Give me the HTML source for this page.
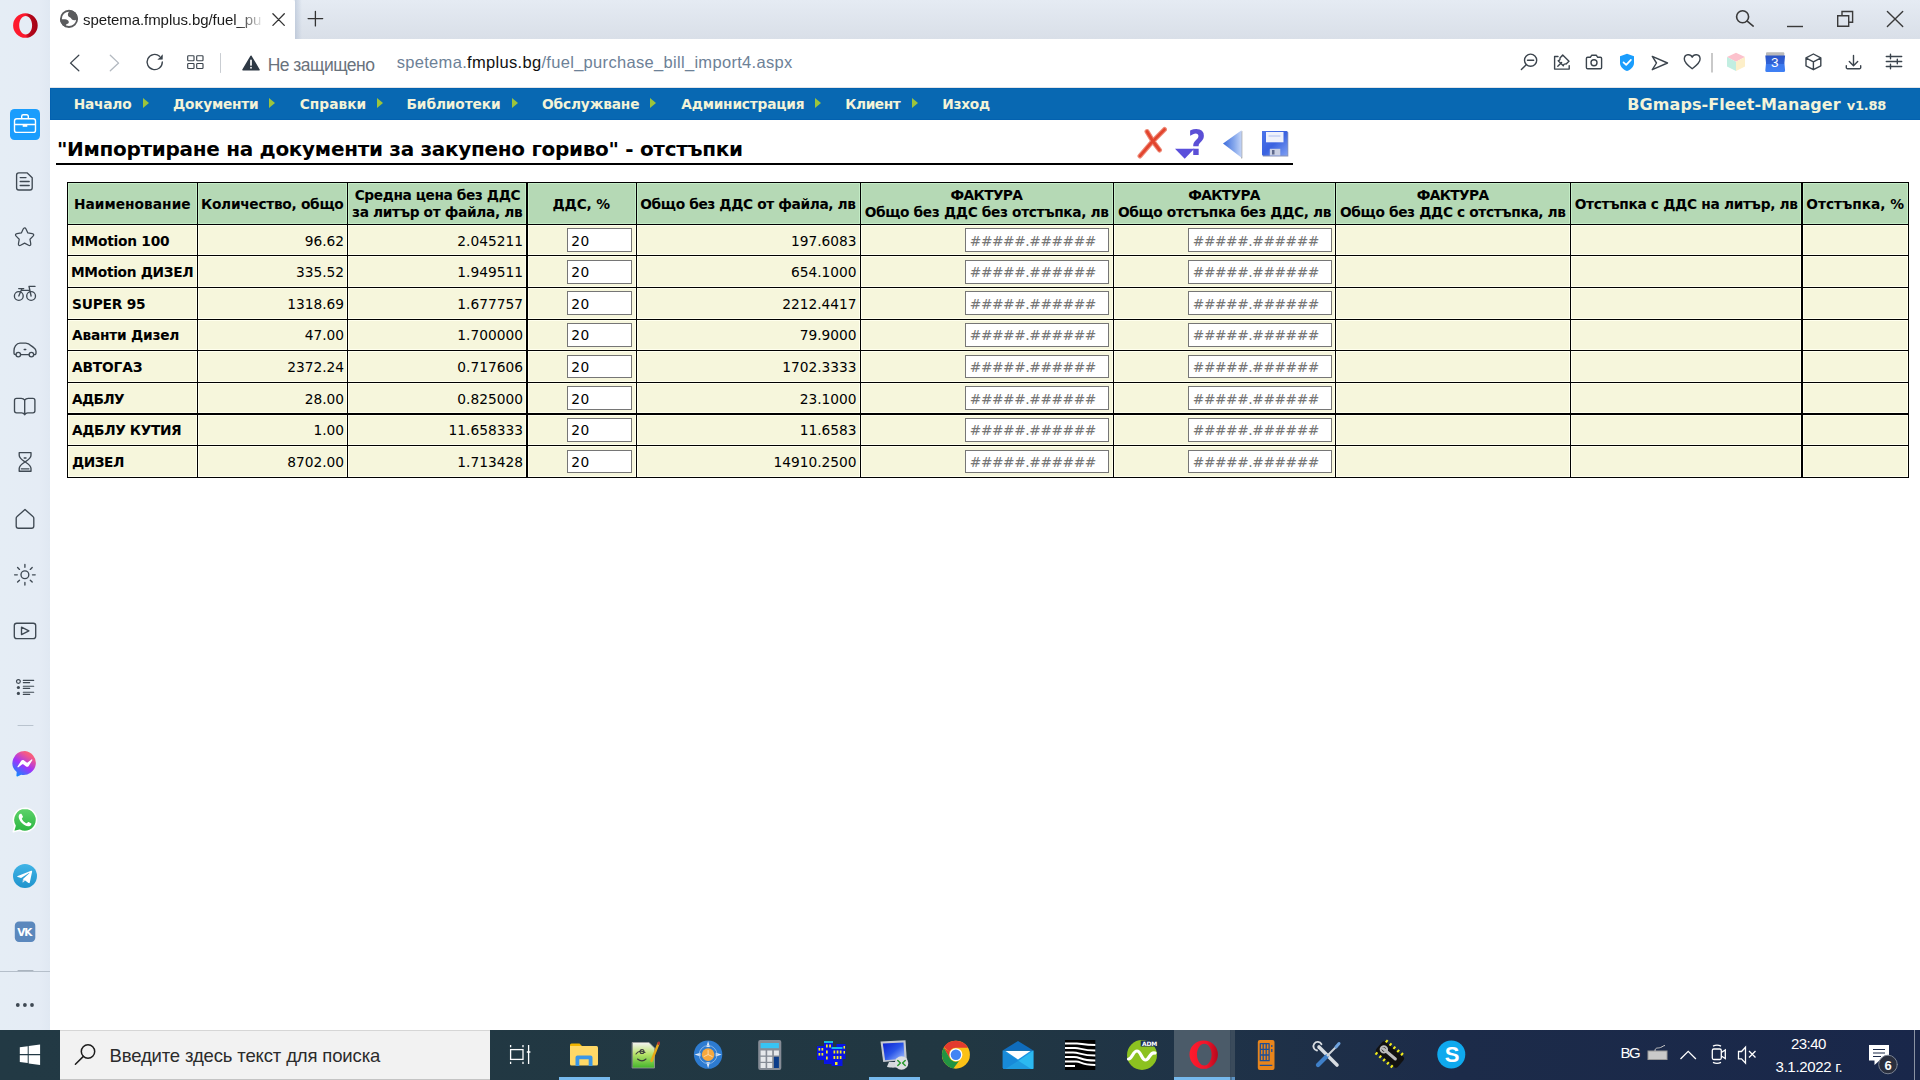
<!DOCTYPE html>
<html lang="bg"><head><meta charset="utf-8"><title>spetema.fmplus.bg/fuel_purchase_bill_import4.aspx</title>
<style>
html,body{margin:0;padding:0}
body{width:1920px;height:1080px;overflow:hidden;background:#fff;position:relative;font-family:"Liberation Sans",sans-serif}
div,span,svg{position:absolute;box-sizing:border-box}
.t{white-space:nowrap;display:block}
.i{position:static}
.tabt{width:180px;overflow:hidden;-webkit-mask-image:linear-gradient(90deg,#000 156px,transparent 181px);mask-image:linear-gradient(90deg,#000 156px,transparent 181px)}
.side{left:0;top:0;width:50px;height:1030px;background:linear-gradient(90deg,#e5edf5 0,#e5ecf5 78%,#e0e8f2 100%)}
.strip{left:50px;top:0;width:1870px;height:39px;background:linear-gradient(#e5ebf3,#d9dfe8)}
.tab{left:50px;top:0;width:245px;height:39px;background:#fff;border-radius:0 2px 0 0}
.tabsh{left:295px;top:0;width:7px;height:39px;background:linear-gradient(90deg,rgba(150,168,195,.38),rgba(150,168,195,0))}
.bar{left:50px;top:39px;width:1870px;height:49px;background:#fff;border-bottom:1px solid #e3e5e8}
.nav{left:50px;top:88px;width:1870px;height:32px;background:#0868b2;border:1px solid #0361af;border-right:0}
.tri{width:0;height:0;border-left:6px solid #9cc43c;border-top:5.5px solid transparent;border-bottom:5.5px solid transparent}
.uline{left:56px;top:163px;width:1237px;height:2px;background:#000}
.blk{background:#000}
.hc{background:#b5d9b5;border:1px solid #c4ecc7}
.dc{background:#f6f6dc;border:1px solid #ffffee}
.inp{background:#fff;border:1px solid #767676}
.task{left:0;top:1030px;width:1920px;height:50px;background:linear-gradient(90deg,#223944 0%,#213742 50%,#1f3347 62%,#1c2b49 76%,#19274a 100%)}
.sbox{left:60px;top:1030px;width:430px;height:50px;background:#f2f2f2;border-top:1px solid #d6d6d6;border-bottom:1px solid #c4c4c4}
</style></head><body>
<div class="side"></div>
<svg class="sb" style="left:0;top:0" width="50" height="1030" viewBox="0 0 50 1030" fill="none" stroke="#3f4953" stroke-width="1.35" stroke-linecap="round" stroke-linejoin="round">
<defs>
<linearGradient id="gop" x1="0" y1="0" x2="1" y2="0"><stop offset="0" stop-color="#ff1b2d"/><stop offset=".5" stop-color="#fb172c"/><stop offset=".64" stop-color="#b8091c"/><stop offset="1" stop-color="#a30013"/></linearGradient>
<linearGradient id="gms" x1=".2" y1="1" x2=".8" y2="0"><stop offset="0" stop-color="#0a8dff"/><stop offset=".45" stop-color="#a033fa"/><stop offset=".8" stop-color="#f0568f"/><stop offset="1" stop-color="#ff6b63"/></linearGradient>
<linearGradient id="gwa" x1="0" y1="0" x2="0" y2="1"><stop offset="0" stop-color="#5fd36b"/><stop offset="1" stop-color="#2ab540"/></linearGradient>
<linearGradient id="gtg" x1="0" y1="0" x2="0" y2="1"><stop offset="0" stop-color="#41b4e6"/><stop offset="1" stop-color="#1e93cd"/></linearGradient>
</defs>
<!-- opera -->
<path stroke="none" fill="url(#gop)" fill-rule="evenodd" d="M25.400 13.200a12.300 12.300 0 1 0 0 24.600a12.300 12.300 0 1 0 0-24.600zM25.650 16c3.550 0 6.450 4.100 6.450 9.300s-2.900 9.300-6.450 9.300s-6.450-4.100-6.450-9.300s2.900-9.300 6.450-9.300z"/>
<!-- workspace -->
<rect x="10" y="109" width="30" height="31" rx="4.500" fill="#1a9dfd" stroke="none"/>
<g stroke="#fff" stroke-width="1.400"><rect x="14.500" y="118.700" width="21" height="13.700" rx="2.200"/><path d="M21.700 118.500v-2.300a1.500 1.500 0 0 1 1.500-1.500h3.600a1.500 1.500 0 0 1 1.500 1.500v2.300M14.700 124.500h20.600"/><rect x="22.700" y="124.500" width="4.600" height="2.300" fill="#fff" stroke="none"/></g>
<!-- doc -->
<path d="M18.800 172.800h8.200l5.200 5v10a2.200 2.200 0 0 1-2.200 2.200h-11.200a2.200 2.200 0 0 1-2.200-2.200v-12.800a2.200 2.200 0 0 1 2.200-2.200zM20.200 177.600h5.800M20.200 181.500h9M20.200 185.500h9"/>
<!-- star -->
<path transform="translate(24.600 237) scale(.93 .95) translate(-24.600 -237.700)" d="M24.600 228c.6 0 1.100.4 1.500 1.200l2 4.200 4.700.7c1.700.3 2.100 1.500.9 2.700l-3.300 3.300.8 4.600c.3 1.700-.8 2.500-2.300 1.700l-4.300-2.200-4.300 2.200c-1.500.8-2.600 0-2.300-1.700l.8-4.600-3.300-3.300c-1.200-1.200-.8-2.400.9-2.700l4.700-.7 2-4.200c.4-.8.900-1.200 1.500-1.200z"/>
<!-- bike -->
<circle cx="18.800" cy="296" r="4.400"/><circle cx="31.100" cy="296" r="4.400"/><path d="M18.800 296l3.200-7.400M18.700 288.600h5M22 290.300h7.300M31.100 296l-2.100-9.600h6"/>
<!-- car -->
<path d="M15.800 354.600h-.5a1.300 1.300 0 0 1-1.300-1.300v-2.800c0-3.200 2.200-7.400 6-7.400h5.800c2.600 0 4 1.200 5.600 2.800l2.300 1.700c1.500 1 2.300 2.100 2.300 3.700v2a1.300 1.300 0 0 1-1.300 1.300h-.900M20.800 354.600h8.200M24.200 349.500h1.600"/><circle cx="18.300" cy="354.600" r="2.300"/><circle cx="31.400" cy="354.600" r="2.300"/>
<!-- book -->
<path d="M24.700 400.200v14.600M24.700 400.200c-.8-1.200-2-1.800-3.500-1.800h-4.700a2 2 0 0 0-2 2v10.400a2 2 0 0 0 2 2h5.200c1.300 0 2.300.6 3 2c.7-1.400 1.700-2 3-2h5.200a2 2 0 0 0 2-2v-10.400a2 2 0 0 0-2-2h-4.700c-1.500 0-2.700.6-3.500 1.800z"/>
<!-- hourglass -->
<path d="M19.200 452.600h11.800v2.600c0 3-2.700 4.600-5.900 6.700c-3.200-2.100-5.900-3.700-5.900-6.700zM19.200 471.200h11.800v-2.600c0-3-2.700-4.600-5.900-6.700c-3.200 2.100-5.900 3.700-5.900 6.700zM21.300 468.800h7.600M24.200 458h1.800"/>
<!-- home -->
<path d="M25 509.400l-7.900 7a2.500 2.500 0 0 0-.9 1.900v7.600a2.300 2.300 0 0 0 2.300 2.300h13a2.300 2.300 0 0 0 2.300-2.300v-7.600a2.500 2.500 0 0 0-.9-1.900z"/>
<!-- sun -->
<circle cx="24.900" cy="574.800" r="3.900"/><path d="M24.900 564.500v2.700M24.900 582.400v2.700M14.600 574.800h2.700M32.500 574.800h2.700M17.600 567.500l1.900 1.900M30.300 580.200l1.900 1.900M17.600 582.100l1.900-1.900M30.300 569.400l1.900-1.900"/>
<!-- play -->
<rect x="14.300" y="623.200" width="21.400" height="15.400" rx="2.400"/><path d="M21.500 627.200v7.400l7.400-3.700z"/>
<!-- list -->
<circle cx="18.400" cy="681.500" r="1.900" stroke-width="1.200"/><circle cx="18.400" cy="687.500" r="1.600" fill="#3f4953" stroke="none"/><circle cx="18.400" cy="693.400" r="1.600" fill="#3f4953" stroke="none"/>
<path stroke-width="1.100" d="M23.300 680.400h10.400M23.300 682.600h6.400M23.300 686.300h10.400M23.300 688.400h6.400M23.300 692.200h10.400M23.300 694.400h6.400"/>
<path stroke="#b9c3ce" stroke-width="1" d="M18 725.500h15"/>
<!-- messenger -->
<path stroke="none" fill="url(#gms)" d="M24.900 751a12.400 12 0 0 0-8.200 21l-.3 3.700c0 .6.500 1 1.100.8l3.600-1.800a12.400 12 0 1 0 3.800-23.700z"/>
<path stroke="none" fill="#fff" d="M17.500 766.500l3.700-5.700c.6-.9 1.800-1.100 2.600-.5l2.900 2.200c.3.200.6.200.9 0l3.900-3c.5-.4 1.200.2.800.8l-3.600 5.700c-.6.900-1.800 1.100-2.600.5l-2.900-2.200c-.3-.2-.6-.2-.9 0l-3.900 3c-.5.400-1.200-.2-.900-.8z"/>
<!-- whatsapp -->
<path fill="url(#gwa)" stroke="#fff" stroke-width="1.600" d="M25 808.300a11.600 11.600 0 0 0-10 17.400l-1.700 6.100 6.300-1.600a11.600 11.600 0 1 0 5.400-21.900z"/>
<path stroke="none" fill="#fff" d="M20.700 813.800c-.5 0-1 .2-1.400.8c-1.600 2.400.2 6 2.600 8.400c2.500 2.500 5.800 4.200 8.400 2.700c.9-.5 1.300-1.700 1-2.200l-2.700-1.500c-.5-.2-.9.100-1.400.9c-.3.400-.7.500-1.200.3c-1.800-.9-3.200-2.200-4.100-4.100c-.2-.4 0-.8.300-1.100c.7-.6.900-1 .7-1.500l-1.200-2.300c-.2-.3-.6-.4-1-.4z"/>
<!-- telegram -->
<circle cx="25" cy="876" r="12" fill="url(#gtg)" stroke="none"/>
<path stroke="none" fill="#fff" d="M17.800 875.900l13.300-5.200c.6-.2 1.200.2 1 1l-2.300 10.700c-.2.800-.6.900-1.300.6l-3.400-2.500-1.700 1.600c-.2.200-.4.400-.7.400l.3-3.500 6.300-5.700c.3-.3-.1-.4-.4-.2l-7.800 4.900-3.300-1c-.7-.2-.7-.7 0-1.100z"/>
<path stroke="none" fill="#c8daea" d="M22.700 882.500l.3-3.500 2.100 1.500z"/>
<!-- vk -->
<rect x="14.800" y="921.500" width="20.500" height="20.500" rx="4.200" fill="#5b88bd" stroke="none"/>
<path stroke="#b5bfca" stroke-width="1" d="M0 971.500h50"/><path stroke="#aab4bf" stroke-width="1" d="M18 970.500h15"/>
<circle cx="17.800" cy="1005" r="1.900" fill="#3f4953" stroke="none"/><circle cx="24.900" cy="1005" r="1.900" fill="#3f4953" stroke="none"/><circle cx="32" cy="1005" r="1.900" fill="#3f4953" stroke="none"/>
</svg>
<span class="t" style="left:17.300px;top:925.500px;font:bold 10.500px/12px 'DejaVu Sans',sans-serif;color:#fff;letter-spacing:-1.200px">VK</span>

<div class="strip"></div>
<div class="tabsh"></div>
<div class="tab"></div>
<div class="bar"></div>
<svg style="left:0;top:0" width="1920" height="88" viewBox="0 0 1920 88" fill="none" stroke="#3b444d" stroke-width="1.400" stroke-linecap="round" stroke-linejoin="round">
<defs><linearGradient id="gcal" x1="0" y1="0" x2="0" y2="1"><stop offset="0" stop-color="#2b55c8"/><stop offset=".5" stop-color="#2f62d6"/><stop offset=".51" stop-color="#3b78ee"/><stop offset="1" stop-color="#3f80f4"/></linearGradient></defs>
<!-- favicon globe -->
<clipPath id="cgl"><circle cx="69" cy="18.900" r="9"/></clipPath>
<circle cx="69" cy="18.900" r="8.100" fill="#fff" stroke="#5a5b5d" stroke-width="1.900"/>
<g clip-path="url(#cgl)" fill="#5a5b5d" stroke="none"><path d="M70.300 10.500c-1.500 1.200-2.400 2.600-2.400 4.200c0 2.200 1.700 2.200 2.700 3.100c1 .9 1.200 2 2.600 2.300c1.300.3 2.400-.5 4-.7l4-.4v-11h-11z"/><path d="M58 19.700c3-.5 6.500-.8 8.400-.2c1.700.6 2.700 1.900 2.300 3.200c-.4 1.200-1.900 1-2.600 1.900c-.6.800-.4 1.600.3 2.400l-2 3h-7z"/></g>
<!-- tab close / plus -->
<path stroke="#333" stroke-width="1.300" d="M272.900 13.800l11.400 11.600M284.300 13.800l-11.400 11.600M315.400 11.300v14.600M308.100 18.600h14.600"/>
<!-- nav -->
<path stroke-width="1.300" d="M78.800 55.300l-8.300 7.800 8.300 7.700"/>
<path stroke="#b3b9c0" stroke-width="1.300" d="M110.300 55.300l8.300 7.800-8.300 7.700"/>
<path stroke-width="1.350" d="M162.300 62a7.600 7.600 0 1 1-2.700-5.800"/><path fill="#3b444d" stroke="none" d="M157.400 59.700l5.300-.3.100-5.200z"/>
<g stroke-width="1.150"><rect x="187.700" y="55.700" width="6.300" height="5" rx=".8"/><rect x="196.700" y="55.700" width="6.300" height="5" rx=".8"/><rect x="187.700" y="63.500" width="6.300" height="5" rx=".8"/><rect x="196.700" y="63.500" width="6.300" height="5" rx=".8"/></g>
<path stroke="#c9cdd2" stroke-width="1" d="M220.500 53.500v19"/>
<!-- warning -->
<path fill="#2e3945" stroke="#2e3945" stroke-width="1.600" d="M251 56.300l8 13.500h-16z"/><path stroke="#fff" stroke-width="1.700" d="M251 60.300v4.700M251 67.600v.2"/>
<!-- right toolbar -->
<circle cx="1530.600" cy="60.200" r="6.100"/><path d="M1526.200 64.800l-4.800 4.600M1527.500 60.200h6.200"/>
<path d="M1558 56.500h-3.400v12.600h14.600v-3.500M1557.800 66.300l3.800-3.800M1560 57.900l2.700-2.900 6.300 6.300-2.900 2.700c-1.700-.4-2.600.5-2.800 1.800l-5.100-5.100c1.300-.2 2.200-1.100 1.800-2.800z"/>
<path d="M1587.700 57.300h2.600l1.300-2h4.800l1.300 2h2.600a1.300 1.300 0 0 1 1.300 1.300v8.800a1.300 1.300 0 0 1-1.300 1.300h-12.600a1.300 1.300 0 0 1-1.300-1.300v-8.800a1.300 1.300 0 0 1 1.300-1.300z"/><circle cx="1594" cy="62.700" r="3"/>
<path fill="#1a9dfd" stroke="none" d="M1627 53.800l7 2.500v6.500c0 4-3 6.700-7 8.300c-4-1.600-7-4.300-7-8.300v-6.500z"/><path stroke="#fff" stroke-width="1.700" d="M1623.500 62.300l2.700 2.600 4.700-5"/>
<path d="M1652.300 56.400l15.200 6.600-15.200 6.700 4.200-6.700z"/>
<path d="M1692.200 57.200c1.500-3.400 7.600-3.500 7.900 1.500c.2 3.400-3.600 6.800-7.900 10.100c-4.300-3.300-8.100-6.700-7.900-10.100c.3-5 6.400-4.900 7.900-1.500z"/>
<path stroke="#c9c9c9" stroke-width="2" stroke-linecap="butt" d="M1712 53v19.600"/>
<g stroke="none"><path fill="#fcc2cd" d="M1736 52.800l9 4.300-9 4.600-9-4.600z"/><path fill="#c2eee1" d="M1727 57.100l9 4.600v9.200l-9-4.500z"/><path fill="#fdefc9" d="M1745 57.100l-9 4.600v9.200l9-4.500z"/>
<rect x="1766" y="52.300" width="18.300" height="4" rx="1" fill="#b9b9b9"/><path fill="url(#gcal)" d="M1765.300 55.500h19.800l-.7 7.500.7 7.500a1.500 1.500 0 0 1-1.500 1.500h-16.800a1.500 1.500 0 0 1-1.500-1.500l.7-7.500z"/></g>
<path d="M1813.400 54l7.400 3.900v7.900l-7.400 3.900-7.400-3.900v-7.900zM1806.300 58.100l7.100 3.700 7.100-3.700M1813.400 61.800v7.700"/>
<path d="M1853.500 55.500v10M1849.300 61.500l4.200 4.200 4.200-4.200M1846.300 65.800v1.700a1.200 1.200 0 0 0 1.200 1.200h12a1.200 1.200 0 0 0 1.200-1.200v-1.700"/>
<path d="M1886.300 56.500h15.400M1886.300 61.500h15.400M1886.300 66.500h15.400M1890.500 54.300v4.400M1897.300 59.300v4.400M1890.500 64.300v4.400"/>
<!-- window controls -->
<g stroke="#3a3a3a" stroke-width="1.400"><circle cx="1742.600" cy="16.700" r="6" stroke-width="1.600"/><path stroke-width="1.600" d="M1747.200 21.200l6 4.900"/><path stroke-linecap="butt" d="M1787 26.500h16"/><path stroke-linejoin="miter" d="M1837.700 15.700h11v10.600h-11zM1842 15.500v-4h10.600v10.800h-3.700"/><path d="M1887.400 11.400l15.300 15.200M1902.700 11.400l-15.300 15.200"/></g>
</svg>
<span class="t" style="left:1771px;top:55px;font:normal 13.500px/16px 'Liberation Sans',sans-serif;color:#fff">3</span>

<div class="nav"></div>
<div class="uline"></div>
<svg style="left:1130px;top:120px" width="170" height="44" viewBox="1130 120 170 44" fill="none" stroke-linecap="round" stroke-linejoin="round">
<defs>
<linearGradient id="gbk" x1="0" y1="0" x2="1" y2="0"><stop offset="0" stop-color="#3b6bdc"/><stop offset=".6" stop-color="#86a8ec"/><stop offset="1" stop-color="#c3d4f7"/></linearGradient>
<linearGradient id="gsv" x1="0" y1="0" x2="1" y2="1"><stop offset="0" stop-color="#4a74ea"/><stop offset=".5" stop-color="#3a62e0"/><stop offset="1" stop-color="#7fa0f2"/></linearGradient>
<filter id="bl" x="-10%" y="-10%" width="120%" height="120%"><feGaussianBlur stdDeviation=".55"/></filter>
</defs>
<g filter="url(#bl)"><path stroke="#ee8a78" stroke-width="5" d="M1164.500 129.500c-9 8.500-17 17-24.500 26.500M1147 131.500c3.500 6.500 7.500 12.500 12.500 18.500"/><path stroke="#e2452f" stroke-width="2.800" d="M1164.500 129.500c-9 8.500-17 17-24.500 26.500M1147 131.500c3.500 6.500 7.500 12.500 12.500 18.500"/></g>
<path fill="#5a4fdb" d="M1175 148.800h19.300l-9.600 10z"/>
<g filter="url(#bl)"><path fill="#9a9a9a" d="M1242.300 131v27.300l-1.200.3v-27z"/><path fill="url(#gbk)" d="M1223 143.500l18.600-13.300v27.600z"/></g>
<g filter="url(#bl)"><path fill="#8a93b5" d="M1262.800 131.800h24.500a1 1 0 0 1 1 1v23.800h-25.500z"/><path fill="url(#gsv)" d="M1262 131h24.500a1 1 0 0 1 1 1v23.500h-24.500a1 1 0 0 1-1-1z"/><rect x="1266" y="132" width="17.500" height="10.300" fill="#eef1fb"/><path stroke="#9db3ee" stroke-width=".8" d="M1269 136h11"/><rect x="1269.800" y="148.800" width="10.500" height="6.700" fill="#c9cfe2"/><rect x="1272" y="150" width="2.500" height="4.500" fill="#5f6a8c"/></g>
</svg>
<span class="t" style="left:1188.300px;top:122.500px;font:bold 35px/40px 'DejaVu Sans',sans-serif;color:#5b4fd6;transform:scaleX(.88);transform-origin:0 0">?</span>

<div class="blk" style="left:67px;top:182px;width:1842px;height:296px"></div>
<div class="hc" style="left:68px;top:183px;width:129px;height:41px"></div>
<div class="hc" style="left:198px;top:183px;width:149px;height:41px"></div>
<div class="hc" style="left:348px;top:183px;width:178px;height:41px"></div>
<div class="hc" style="left:528px;top:183px;width:108px;height:41px"></div>
<div class="hc" style="left:637px;top:183px;width:223px;height:41px"></div>
<div class="hc" style="left:861px;top:183px;width:252px;height:41px"></div>
<div class="hc" style="left:1114px;top:183px;width:221px;height:41px"></div>
<div class="hc" style="left:1336px;top:183px;width:234px;height:41px"></div>
<div class="hc" style="left:1571px;top:183px;width:230px;height:41px"></div>
<div class="hc" style="left:1803px;top:183px;width:105px;height:41px"></div>
<div class="dc" style="left:68px;top:225px;width:129px;height:30px"></div>
<div class="dc" style="left:198px;top:225px;width:149px;height:30px"></div>
<div class="dc" style="left:348px;top:225px;width:178px;height:30px"></div>
<div class="dc" style="left:528px;top:225px;width:108px;height:30px"></div>
<div class="dc" style="left:637px;top:225px;width:223px;height:30px"></div>
<div class="dc" style="left:861px;top:225px;width:252px;height:30px"></div>
<div class="dc" style="left:1114px;top:225px;width:221px;height:30px"></div>
<div class="dc" style="left:1336px;top:225px;width:234px;height:30px"></div>
<div class="dc" style="left:1571px;top:225px;width:230px;height:30px"></div>
<div class="dc" style="left:1803px;top:225px;width:105px;height:30px"></div>
<div class="dc" style="left:68px;top:256px;width:129px;height:31px"></div>
<div class="dc" style="left:198px;top:256px;width:149px;height:31px"></div>
<div class="dc" style="left:348px;top:256px;width:178px;height:31px"></div>
<div class="dc" style="left:528px;top:256px;width:108px;height:31px"></div>
<div class="dc" style="left:637px;top:256px;width:223px;height:31px"></div>
<div class="dc" style="left:861px;top:256px;width:252px;height:31px"></div>
<div class="dc" style="left:1114px;top:256px;width:221px;height:31px"></div>
<div class="dc" style="left:1336px;top:256px;width:234px;height:31px"></div>
<div class="dc" style="left:1571px;top:256px;width:230px;height:31px"></div>
<div class="dc" style="left:1803px;top:256px;width:105px;height:31px"></div>
<div class="dc" style="left:68px;top:288px;width:129px;height:31px"></div>
<div class="dc" style="left:198px;top:288px;width:149px;height:31px"></div>
<div class="dc" style="left:348px;top:288px;width:178px;height:31px"></div>
<div class="dc" style="left:528px;top:288px;width:108px;height:31px"></div>
<div class="dc" style="left:637px;top:288px;width:223px;height:31px"></div>
<div class="dc" style="left:861px;top:288px;width:252px;height:31px"></div>
<div class="dc" style="left:1114px;top:288px;width:221px;height:31px"></div>
<div class="dc" style="left:1336px;top:288px;width:234px;height:31px"></div>
<div class="dc" style="left:1571px;top:288px;width:230px;height:31px"></div>
<div class="dc" style="left:1803px;top:288px;width:105px;height:31px"></div>
<div class="dc" style="left:68px;top:320px;width:129px;height:30px"></div>
<div class="dc" style="left:198px;top:320px;width:149px;height:30px"></div>
<div class="dc" style="left:348px;top:320px;width:178px;height:30px"></div>
<div class="dc" style="left:528px;top:320px;width:108px;height:30px"></div>
<div class="dc" style="left:637px;top:320px;width:223px;height:30px"></div>
<div class="dc" style="left:861px;top:320px;width:252px;height:30px"></div>
<div class="dc" style="left:1114px;top:320px;width:221px;height:30px"></div>
<div class="dc" style="left:1336px;top:320px;width:234px;height:30px"></div>
<div class="dc" style="left:1571px;top:320px;width:230px;height:30px"></div>
<div class="dc" style="left:1803px;top:320px;width:105px;height:30px"></div>
<div class="dc" style="left:68px;top:351px;width:129px;height:31px"></div>
<div class="dc" style="left:198px;top:351px;width:149px;height:31px"></div>
<div class="dc" style="left:348px;top:351px;width:178px;height:31px"></div>
<div class="dc" style="left:528px;top:351px;width:108px;height:31px"></div>
<div class="dc" style="left:637px;top:351px;width:223px;height:31px"></div>
<div class="dc" style="left:861px;top:351px;width:252px;height:31px"></div>
<div class="dc" style="left:1114px;top:351px;width:221px;height:31px"></div>
<div class="dc" style="left:1336px;top:351px;width:234px;height:31px"></div>
<div class="dc" style="left:1571px;top:351px;width:230px;height:31px"></div>
<div class="dc" style="left:1803px;top:351px;width:105px;height:31px"></div>
<div class="dc" style="left:68px;top:383px;width:129px;height:30px"></div>
<div class="dc" style="left:198px;top:383px;width:149px;height:30px"></div>
<div class="dc" style="left:348px;top:383px;width:178px;height:30px"></div>
<div class="dc" style="left:528px;top:383px;width:108px;height:30px"></div>
<div class="dc" style="left:637px;top:383px;width:223px;height:30px"></div>
<div class="dc" style="left:861px;top:383px;width:252px;height:30px"></div>
<div class="dc" style="left:1114px;top:383px;width:221px;height:30px"></div>
<div class="dc" style="left:1336px;top:383px;width:234px;height:30px"></div>
<div class="dc" style="left:1571px;top:383px;width:230px;height:30px"></div>
<div class="dc" style="left:1803px;top:383px;width:105px;height:30px"></div>
<div class="dc" style="left:68px;top:415px;width:129px;height:30px"></div>
<div class="dc" style="left:198px;top:415px;width:149px;height:30px"></div>
<div class="dc" style="left:348px;top:415px;width:178px;height:30px"></div>
<div class="dc" style="left:528px;top:415px;width:108px;height:30px"></div>
<div class="dc" style="left:637px;top:415px;width:223px;height:30px"></div>
<div class="dc" style="left:861px;top:415px;width:252px;height:30px"></div>
<div class="dc" style="left:1114px;top:415px;width:221px;height:30px"></div>
<div class="dc" style="left:1336px;top:415px;width:234px;height:30px"></div>
<div class="dc" style="left:1571px;top:415px;width:230px;height:30px"></div>
<div class="dc" style="left:1803px;top:415px;width:105px;height:30px"></div>
<div class="dc" style="left:68px;top:446px;width:129px;height:31px"></div>
<div class="dc" style="left:198px;top:446px;width:149px;height:31px"></div>
<div class="dc" style="left:348px;top:446px;width:178px;height:31px"></div>
<div class="dc" style="left:528px;top:446px;width:108px;height:31px"></div>
<div class="dc" style="left:637px;top:446px;width:223px;height:31px"></div>
<div class="dc" style="left:861px;top:446px;width:252px;height:31px"></div>
<div class="dc" style="left:1114px;top:446px;width:221px;height:31px"></div>
<div class="dc" style="left:1336px;top:446px;width:234px;height:31px"></div>
<div class="dc" style="left:1571px;top:446px;width:230px;height:31px"></div>
<div class="dc" style="left:1803px;top:446px;width:105px;height:31px"></div>
<div class="inp" style="left:567px;top:228px;width:65px;height:24px"></div>
<div class="inp" style="left:965px;top:228px;width:144px;height:24px"></div>
<div class="inp" style="left:1188px;top:228px;width:144px;height:24px"></div>
<div class="inp" style="left:567px;top:260px;width:65px;height:24px"></div>
<div class="inp" style="left:965px;top:260px;width:144px;height:24px"></div>
<div class="inp" style="left:1188px;top:260px;width:144px;height:24px"></div>
<div class="inp" style="left:567px;top:291px;width:65px;height:24px"></div>
<div class="inp" style="left:965px;top:291px;width:144px;height:24px"></div>
<div class="inp" style="left:1188px;top:291px;width:144px;height:24px"></div>
<div class="inp" style="left:567px;top:323px;width:65px;height:24px"></div>
<div class="inp" style="left:965px;top:323px;width:144px;height:24px"></div>
<div class="inp" style="left:1188px;top:323px;width:144px;height:24px"></div>
<div class="inp" style="left:567px;top:355px;width:65px;height:23px"></div>
<div class="inp" style="left:965px;top:355px;width:144px;height:23px"></div>
<div class="inp" style="left:1188px;top:355px;width:144px;height:23px"></div>
<div class="inp" style="left:567px;top:386px;width:65px;height:24px"></div>
<div class="inp" style="left:965px;top:386px;width:144px;height:24px"></div>
<div class="inp" style="left:1188px;top:386px;width:144px;height:24px"></div>
<div class="inp" style="left:567px;top:418px;width:65px;height:24px"></div>
<div class="inp" style="left:965px;top:418px;width:144px;height:24px"></div>
<div class="inp" style="left:1188px;top:418px;width:144px;height:24px"></div>
<div class="inp" style="left:567px;top:450px;width:65px;height:23px"></div>
<div class="inp" style="left:965px;top:450px;width:144px;height:23px"></div>
<div class="inp" style="left:1188px;top:450px;width:144px;height:23px"></div>
<div class="tri" style="left:143px;top:98px"></div>
<div class="tri" style="left:269px;top:98px"></div>
<div class="tri" style="left:377px;top:98px"></div>
<div class="tri" style="left:512px;top:98px"></div>
<div class="tri" style="left:650px;top:98px"></div>
<div class="tri" style="left:815px;top:98px"></div>
<div class="tri" style="left:912px;top:98px"></div>
<div class="task"></div>
<div class="sbox"></div>
<svg style="left:0;top:1030px" width="1920" height="50" viewBox="0 1030 1920 50" fill="none" stroke-linecap="round" stroke-linejoin="round">
<defs>
<linearGradient id="gop2" x1="0" y1="0" x2="1" y2="0"><stop offset="0" stop-color="#ff1b2d"/><stop offset=".6" stop-color="#f0142a"/><stop offset="1" stop-color="#b5091c"/></linearGradient>
<linearGradient id="gscr" x1="0" y1="0" x2="1" y2="1"><stop offset="0" stop-color="#0a1fd0"/><stop offset=".5" stop-color="#2a55e8"/><stop offset="1" stop-color="#a8c4ff"/></linearGradient>
<linearGradient id="gnp" x1="0" y1="0" x2="0" y2="1"><stop offset="0" stop-color="#f4f4f4"/><stop offset=".45" stop-color="#b9e26a"/><stop offset="1" stop-color="#43b52c"/></linearGradient>
</defs>
<!-- start -->
<path fill="#fff" d="M19.800 1047.300l7.900-1.100v7.800h-7.900zM28.700 1046l11.400-1.600v9.600h-11.400zM19.800 1055.200h7.900v7.800l-7.900-1.100zM28.700 1055.200h11.400v9.800l-11.400-1.600z"/>
<!-- search glass -->
<circle cx="88" cy="1051.500" r="6.700" stroke="#1d1d1d" stroke-width="1.500"/><path stroke="#1d1d1d" stroke-width="1.500" d="M83.400 1056.400l-8 7.900"/>
<!-- task view -->
<g stroke="#fff" stroke-width="1.300" stroke-linecap="butt" stroke-linejoin="miter"><rect x="510.600" y="1049.600" width="12.400" height="9.800"/><path d="M510.600 1047.200v-2.300M523 1047.200v-2.300M510.600 1061.800v2.300M523 1061.800v2.300M528.600 1044.900v19.200M526.800 1052h3.600"/></g>
<!-- explorer -->
<path fill="#f0b400" d="M570 1045a1.500 1.500 0 0 1 1.500-1.500h8l2.500 2.500h-12z"/><path fill="#ffd866" d="M570 1046h26.500a1.500 1.500 0 0 1 1.500 1.500v16.500a1.500 1.500 0 0 1-1.500 1.500h-25a1.500 1.500 0 0 1-1.500-1.500z"/>
<path fill="#3a96e6" d="M575.500 1066v-8.500a2 2 0 0 1 2-2h13a2 2 0 0 1 2 2v8.500h-3.800v-6.800h-9.400v6.800z"/>
<rect x="559" y="1077" width="51" height="3" fill="#76b9ed"/>
<!-- notepad++ -->
<path fill="url(#gnp)" stroke="#9a9a9a" stroke-width=".8" d="M632.500 1042.500h16.500l5.500 5.500v20h-22z"/><path stroke="#3c3c3c" stroke-width="1.100" d="M636 1054c2-3 6-4 9-1.500M637.500 1059c3 2.500 6 2.500 8.500 0M640 1051.500a2 2 0 1 0 4 0a2 2 0 1 0-4 0"/><path stroke="#e8a917" stroke-width="2.400" d="M658.500 1043.500l-7 17.500"/><path stroke="#a33" stroke-width="2.400" d="M658.800 1042.700l-.4 1"/>
<!-- compass -->
<circle cx="708.100" cy="1054.600" r="14.200" fill="#2d7bd0"/><path fill="#dfeaf8" d="M708.100 1041l1.800 6h-3.600zM708.100 1068.200l1.800-6h-3.600zM694.500 1054.600l6-1.800v3.600zM721.700 1054.600l-6-1.800v3.600z"/><circle cx="708.100" cy="1054.600" r="9" stroke="#9cc3ee" stroke-width=".8"/><circle cx="708.100" cy="1054.600" r="6.300" fill="#f5a83f"/><path stroke="#fbd9a8" stroke-width="1" d="M708.100 1050.500v4.100M704 1056.500l4.100-1.900 4.100 1.900"/>
<!-- calculator -->
<rect x="758.200" y="1040" width="23.100" height="30" rx="2" fill="#868c96"/><rect x="760.600" y="1043" width="18.300" height="5.200" fill="#38c4f4"/>
<g fill="#e6e8eb"><rect x="760.600" y="1050.500" width="5" height="5"/><rect x="767.200" y="1050.500" width="5" height="5"/><rect x="773.900" y="1050.500" width="5" height="5"/><rect x="760.600" y="1056.800" width="5" height="5"/><rect x="767.200" y="1056.800" width="5" height="5"/><rect x="760.600" y="1063" width="5" height="5"/><rect x="767.200" y="1063" width="5" height="5"/></g><rect x="773.900" y="1056.800" width="5" height="11.200" fill="#0b3c8a"/>
<!-- city -->
<g><rect x="817" y="1046" width="9" height="14" fill="#0a14e6"/><rect x="824" y="1042" width="9" height="22" fill="#0a14e6"/><rect x="824" y="1041.200" width="9" height="1.600" fill="#19e0f0"/><rect x="836.500" y="1044" width="9" height="15" fill="#0a14e6"/><rect x="831.500" y="1048" width="11" height="18" fill="#0a14e6"/><rect x="831.500" y="1047.200" width="11" height="1.600" fill="#19e0f0"/>
<g fill="#f4ee1a"><rect x="818.500" y="1048" width="1.700" height="2.600"/><rect x="821.500" y="1048" width="1.700" height="2.600"/><rect x="818.500" y="1053" width="1.700" height="2.600"/><rect x="821.500" y="1053" width="1.700" height="2.600"/><rect x="826" y="1044.500" width="1.700" height="3"/><rect x="829.200" y="1044.500" width="1.700" height="3"/><rect x="826" y="1050.500" width="1.700" height="3"/><rect x="826" y="1056.500" width="1.700" height="3"/><rect x="833.500" y="1050.500" width="1.700" height="3"/><rect x="836.700" y="1050.500" width="1.700" height="3"/><rect x="839.800" y="1050.500" width="1.700" height="3"/><rect x="833.500" y="1056" width="1.700" height="3"/><rect x="836.700" y="1056" width="1.700" height="3"/><rect x="839.800" y="1056" width="1.700" height="3"/><rect x="835" y="1062" width="2.500" height="3"/><rect x="843.500" y="1046" width="1.500" height="2.600"/><rect x="843.500" y="1051" width="1.500" height="2.600"/></g></g>
<!-- rdp -->
<path fill="#c4c8cf" d="M880.500 1041.500l25-1.300 1.300 19.600-23.600 2.200z"/><path fill="url(#gscr)" d="M882.800 1043.400l20.700-1 1 16-19.400 1.800z"/><path fill="#d5d8dc" d="M889 1062h8l2 4.500c0 1.500-12 1.500-12 0z"/><circle cx="901.500" cy="1063" r="6.800" fill="#dcdfe2"/><path stroke="#2a9c2e" stroke-width="1.500" d="M897.800 1060.500l2.600 2.500-2.600 2.500M905.200 1060.500l-2.600 2.500 2.600 2.500"/>
<rect x="869" y="1077" width="51" height="3" fill="#76b9ed"/>
<!-- chrome -->
<circle cx="955.900" cy="1054.700" r="14" fill="#fbc116"/><path fill="#e33b2e" d="M955.900 1040.700a14 14 0 0 1 12.100 7h-12.100a7 7 0 0 0-6.300 4l-5.800-4.600a14 14 0 0 1 12.100-6.400z"/><path fill="#e33b2e" d="M943.800 1047.700l6 10.500l-.2-6.500z"/><path fill="#229342" d="M943.800 1047.700a14 14 0 0 0 9.600 20.800l5.600-7.400a7 7 0 0 1-9.200-2.900z"/><circle cx="955.900" cy="1054.700" r="6.500" fill="#fff"/><circle cx="955.900" cy="1054.700" r="5.200" fill="#4285f4"/>
<!-- mail -->
<path fill="#0f6cbd" d="M1018 1041l15.400 9.500h-30.800z"/><path fill="#1b93e0" d="M1002.700 1050.500h30.700v17a1.500 1.500 0 0 1-1.500 1.500h-27.700a1.500 1.500 0 0 1-1.500-1.500z"/><path fill="#fff" d="M1005.500 1051h25l-12.500 8.500z"/><path fill="#2cb9f0" d="M1033.400 1050.500v18.500h-28l15-9.500z"/><path fill="#1583d1" d="M1002.700 1050.500l28.500 18.500h-27a1.500 1.500 0 0 1-1.500-1.500z" opacity=".55"/>
<!-- stripes -->
<rect x="1065" y="1040" width="30.300" height="30" fill="#000"/><g stroke="#fff" stroke-width="2" stroke-linecap="butt"><path d="M1065 1043.500h12c5 0 6 1.500 18.300 1.500M1065 1048h10c6 0 7 2.500 20.300 2.500M1065 1052.500h8c7 0 8 3 22.300 3M1065 1057h9c7 0 6 3.500 21.300 3.500M1065 1061.500h11c6 0 4 3.500 19.300 3.500M1065 1066h10"/></g>
<!-- adm -->
<circle cx="1142" cy="1055" r="15" fill="#8cc220"/><path stroke="#fff" stroke-width="3.200" d="M1128.500 1059c3.500 0 4.500-8 8.500-8s4.500 9 8.500 9s4.500-9 9.500-7"/><rect x="1140.700" y="1040.500" width="16" height="6" fill="#1d2f57"/>
<!-- opera active -->
<rect x="1174" y="1030" width="56.400" height="50" fill="#4b5b69"/><rect x="1230.400" y="1030" width="4.600" height="50" fill="#3b4b5b"/><rect x="1174" y="1077" width="56.400" height="3" fill="#76b9ed"/><rect x="1231.400" y="1077" width="3.600" height="3" fill="#5c93c4"/>
<path fill="url(#gop2)" fill-rule="evenodd" d="M1203.700 1040.400a14.200 14.200 0 1 0 0 28.400a14.200 14.200 0 1 0 0-28.400zM1204.300 1043.800c4 0 7.300 4.800 7.300 10.800s-3.300 11-7.300 11s-7.300-5-7.300-11s3.300-10.800 7.300-10.800z"/>
<!-- vending -->
<rect x="1257.800" y="1040" width="16.700" height="30" rx="2" fill="#e8851c"/><g stroke="#1f4f96" stroke-width="1.300" stroke-linecap="butt"><path d="M1260.300 1043.700h8.800v17h-8.800zM1263.200 1043.700v17M1266.200 1043.700v17M1260.300 1049.400h8.800M1260.300 1055h8.800M1259.800 1065.300h12.500M1271.800 1045v2M1271.800 1049v3"/></g>
<!-- tools -->
<path stroke="#d9dde2" stroke-width="3.600" d="M1319 1047l18 18"/><path stroke="#d9dde2" stroke-width="1.800" fill="none" d="M1321.500 1044.200a4.300 4.300 0 1 0-4.500 6.300"/><path stroke="#3f80c9" stroke-width="4.200" d="M1318 1065l8.500-8.500"/><path stroke="#cfd5db" stroke-width="2" d="M1327.500 1055.500l9-9"/><path stroke="#6ea2dd" stroke-width="3" d="M1336 1047l3-3.500"/>
<!-- gear -->
<g transform="rotate(40 1390 1054.500)"><rect x="1376" y="1047.500" width="28" height="14" rx="3" fill="#111"/><path stroke="#f4ee1a" stroke-width="2" stroke-linecap="butt" d="M1379 1045v3M1384 1045v3M1389 1045v3M1394 1045v3M1399 1045v3M1379 1061v3M1384 1061v3M1389 1061v3M1394 1061v3M1399 1061v3"/><path stroke="#bdbdbd" stroke-width="3" d="M1381 1054.500h16"/><circle cx="1382" cy="1054.500" r="3.200" stroke="#bdbdbd" stroke-width="2"/></g>
<!-- skype -->
<circle cx="1451.300" cy="1054.500" r="14" fill="#0fa9ee"/>
<!-- tray -->
<g stroke="#fff" stroke-width="1.300" stroke-linecap="butt" stroke-linejoin="miter"><rect x="1648" y="1051" width="19" height="8.500" fill="#c9c9c9" stroke="#9a9a9a" stroke-width="1"/><path stroke="#c9c9c9" stroke-width="1" fill="none" d="M1655 1051c0-4 3-2.500 5.500-3.500s3-2 4.500-2"/><path d="M1680.500 1059l7.700-7.700 7.700 7.700"/><rect x="1712.300" y="1049" width="9" height="10.500" rx="1.500"/><path d="M1721.300 1052.500l4-2.500v8.500l-4-2.500M1713 1046.200c2.500-1.300 5.500-1.300 8 0M1713 1062.300c2.500 1.300 5.500 1.300 8 0"/><path d="M1738.500 1051.500h3l4-4.300v16l-4-4.300h-3zM1749 1051l6.500 6.500M1755.500 1051l-6.500 6.500"/></g>
<path fill="#fff" d="M1869 1045h20v15.500h-9.500l-5 4.500v-4.500h-5.500z"/><path stroke="#1c2a48" stroke-width="1.200" stroke-linecap="butt" d="M1873 1049.500h12M1873 1053h12M1873 1056.500h8"/><circle cx="1888" cy="1064.500" r="9.300" fill="#2a2f3e" stroke="#7a8291" stroke-width="1"/>
<path stroke="#8a93a3" stroke-width="1" d="M1914.500 1030v50"/>
</svg>
<span class="t" style="left:1444.800px;top:1042.500px;font:bold 22px/24px 'Liberation Sans',sans-serif;color:#fff">S</span>
<span class="t" style="left:1142px;top:1039.800px;font:bold 6px/7px 'DejaVu Sans',sans-serif;color:#fff;letter-spacing:-.2px">ADM</span>

<span class="t" style="left:73.7px;top:95px;font:bold 13.75px/18px 'DejaVu Sans',sans-serif;color:#f3f3d8;letter-spacing:-0.215px;">Начало</span>
<span class="t" style="left:173px;top:95px;font:bold 13.75px/18px 'DejaVu Sans',sans-serif;color:#f3f3d8;letter-spacing:-0.253px;">Документи</span>
<span class="t" style="left:299.7px;top:95px;font:bold 13.75px/18px 'DejaVu Sans',sans-serif;color:#f3f3d8;letter-spacing:0.009px;">Справки</span>
<span class="t" style="left:406.5px;top:95px;font:bold 13.75px/18px 'DejaVu Sans',sans-serif;color:#f3f3d8;letter-spacing:-0.11px;">Библиотеки</span>
<span class="t" style="left:542px;top:95px;font:bold 13.75px/18px 'DejaVu Sans',sans-serif;color:#f3f3d8;letter-spacing:-0.16px;">Обслужване</span>
<span class="t" style="left:681.3px;top:95px;font:bold 13.75px/18px 'DejaVu Sans',sans-serif;color:#f3f3d8;letter-spacing:-0.202px;">Администрация</span>
<span class="t" style="left:845.2px;top:95px;font:bold 13.75px/18px 'DejaVu Sans',sans-serif;color:#f3f3d8;letter-spacing:-0.434px;">Клиент</span>
<span class="t" style="left:942.3px;top:95px;font:bold 13.75px/18px 'DejaVu Sans',sans-serif;color:#f3f3d8;letter-spacing:-0.278px;">Изход</span>
<span class="t" style="left:1627.3px;top:93.8px;font:bold 16px/21px 'DejaVu Sans',sans-serif;color:#f3f3d8;letter-spacing:0.077px;">BGmaps-Fleet-Manager</span>
<span class="t" style="left:1846.7px;top:96.8px;font:bold 13px/17px 'DejaVu Sans',sans-serif;color:#f3f3d8;letter-spacing:-0.226px;">v1.88</span>
<span class="t" style="left:57px;top:136px;font:bold 20px/26px 'DejaVu Sans',sans-serif;color:#000;letter-spacing:-0.304px;">&quot;Импортиране на документи за закупено гориво&quot; - отстъпки</span>
<span class="t" style="left:74px;top:195px;font:bold 13.75px/18px 'DejaVu Sans',sans-serif;color:#000;letter-spacing:0.023px;">Наименование</span>
<span class="t" style="left:201px;top:195px;font:bold 13.75px/18px 'DejaVu Sans',sans-serif;color:#000;letter-spacing:-0.292px;">Количество, общо</span>
<span class="t" style="left:354.7px;top:186px;font:bold 13.75px/18px 'DejaVu Sans',sans-serif;color:#000;letter-spacing:-0.412px;">Средна цена без ДДС</span>
<span class="t" style="left:352px;top:203px;font:bold 13.75px/18px 'DejaVu Sans',sans-serif;color:#000;letter-spacing:-0.344px;">за литър от файла, лв</span>
<span class="t" style="left:552.5px;top:195px;font:bold 13.75px/18px 'DejaVu Sans',sans-serif;color:#000;letter-spacing:-0.159px;">ДДС, %</span>
<span class="t" style="left:640.3px;top:195px;font:bold 13.75px/18px 'DejaVu Sans',sans-serif;color:#000;letter-spacing:-0.374px;">Общо без ДДС от файла, лв</span>
<span class="t" style="left:950.5px;top:186px;font:bold 13.75px/18px 'DejaVu Sans',sans-serif;color:#000;letter-spacing:-0.629px;">ФАКТУРА</span>
<span class="t" style="left:864.7px;top:203px;font:bold 13.75px/18px 'DejaVu Sans',sans-serif;color:#000;letter-spacing:-0.359px;">Общо без ДДС без отстъпка, лв</span>
<span class="t" style="left:1188.3px;top:186px;font:bold 13.75px/18px 'DejaVu Sans',sans-serif;color:#000;letter-spacing:-0.679px;">ФАКТУРА</span>
<span class="t" style="left:1118px;top:203px;font:bold 13.75px/18px 'DejaVu Sans',sans-serif;color:#000;letter-spacing:-0.382px;">Общо отстъпка без ДДС, лв</span>
<span class="t" style="left:1416.7px;top:186px;font:bold 13.75px/18px 'DejaVu Sans',sans-serif;color:#000;letter-spacing:-0.629px;">ФАКТУРА</span>
<span class="t" style="left:1340px;top:203px;font:bold 13.75px/18px 'DejaVu Sans',sans-serif;color:#000;letter-spacing:-0.365px;">Общо без ДДС с отстъпка, лв</span>
<span class="t" style="left:1574.7px;top:195px;font:bold 13.75px/18px 'DejaVu Sans',sans-serif;color:#000;letter-spacing:-0.316px;">Отстъпка с ДДС на литър, лв</span>
<span class="t" style="left:1806.3px;top:195px;font:bold 13.75px/18px 'DejaVu Sans',sans-serif;color:#000;letter-spacing:-0.033px;">Отстъпка, %</span>
<span class="t" style="left:71px;top:232px;font:bold 13.75px/18px 'DejaVu Sans',sans-serif;color:#000;letter-spacing:-0.225px;">MMotion 100</span>
<span class="t" style="left:304.68px;top:232px;font:normal 13.75px/18px 'DejaVu Sans',sans-serif;color:#000;">96.62</span>
<span class="t" style="left:457.34px;top:232px;font:normal 13.75px/18px 'DejaVu Sans',sans-serif;color:#000;">2.045211</span>
<span class="t" style="left:790.94px;top:232px;font:normal 13.75px/18px 'DejaVu Sans',sans-serif;color:#000;">197.6083</span>
<span class="t" style="left:571.2px;top:232px;font:normal 13.75px/18px 'DejaVu Sans',sans-serif;color:#000;letter-spacing:0.552px;">20</span>
<span class="t" style="left:969.8px;top:232px;font:normal 13.75px/18px 'DejaVu Sans',sans-serif;color:#757575;letter-spacing:-0.416px;">#####.######</span>
<span class="t" style="left:1192.8px;top:232px;font:normal 13.75px/18px 'DejaVu Sans',sans-serif;color:#757575;letter-spacing:-0.416px;">#####.######</span>
<span class="t" style="left:71px;top:263px;font:bold 13.75px/18px 'DejaVu Sans',sans-serif;color:#000;letter-spacing:-0.311px;">MMotion ДИЗЕЛ</span>
<span class="t" style="left:295.94px;top:263px;font:normal 13.75px/18px 'DejaVu Sans',sans-serif;color:#000;">335.52</span>
<span class="t" style="left:457.34px;top:263px;font:normal 13.75px/18px 'DejaVu Sans',sans-serif;color:#000;">1.949511</span>
<span class="t" style="left:790.94px;top:263px;font:normal 13.75px/18px 'DejaVu Sans',sans-serif;color:#000;">654.1000</span>
<span class="t" style="left:571.2px;top:263px;font:normal 13.75px/18px 'DejaVu Sans',sans-serif;color:#000;letter-spacing:0.552px;">20</span>
<span class="t" style="left:969.8px;top:263px;font:normal 13.75px/18px 'DejaVu Sans',sans-serif;color:#757575;letter-spacing:-0.416px;">#####.######</span>
<span class="t" style="left:1192.8px;top:263px;font:normal 13.75px/18px 'DejaVu Sans',sans-serif;color:#757575;letter-spacing:-0.416px;">#####.######</span>
<span class="t" style="left:72px;top:295px;font:bold 13.75px/18px 'DejaVu Sans',sans-serif;color:#000;letter-spacing:-0.211px;">SUPER 95</span>
<span class="t" style="left:287.19px;top:295px;font:normal 13.75px/18px 'DejaVu Sans',sans-serif;color:#000;">1318.69</span>
<span class="t" style="left:457.34px;top:295px;font:normal 13.75px/18px 'DejaVu Sans',sans-serif;color:#000;">1.677757</span>
<span class="t" style="left:782.19px;top:295px;font:normal 13.75px/18px 'DejaVu Sans',sans-serif;color:#000;">2212.4417</span>
<span class="t" style="left:571.2px;top:295px;font:normal 13.75px/18px 'DejaVu Sans',sans-serif;color:#000;letter-spacing:0.552px;">20</span>
<span class="t" style="left:969.8px;top:295px;font:normal 13.75px/18px 'DejaVu Sans',sans-serif;color:#757575;letter-spacing:-0.416px;">#####.######</span>
<span class="t" style="left:1192.8px;top:295px;font:normal 13.75px/18px 'DejaVu Sans',sans-serif;color:#757575;letter-spacing:-0.416px;">#####.######</span>
<span class="t" style="left:72px;top:326px;font:bold 13.75px/18px 'DejaVu Sans',sans-serif;color:#000;letter-spacing:-0.219px;">Аванти Дизел</span>
<span class="t" style="left:304.68px;top:326px;font:normal 13.75px/18px 'DejaVu Sans',sans-serif;color:#000;">47.00</span>
<span class="t" style="left:457.34px;top:326px;font:normal 13.75px/18px 'DejaVu Sans',sans-serif;color:#000;">1.700000</span>
<span class="t" style="left:799.69px;top:326px;font:normal 13.75px/18px 'DejaVu Sans',sans-serif;color:#000;">79.9000</span>
<span class="t" style="left:571.2px;top:326px;font:normal 13.75px/18px 'DejaVu Sans',sans-serif;color:#000;letter-spacing:0.552px;">20</span>
<span class="t" style="left:969.8px;top:326px;font:normal 13.75px/18px 'DejaVu Sans',sans-serif;color:#757575;letter-spacing:-0.416px;">#####.######</span>
<span class="t" style="left:1192.8px;top:326px;font:normal 13.75px/18px 'DejaVu Sans',sans-serif;color:#757575;letter-spacing:-0.416px;">#####.######</span>
<span class="t" style="left:72px;top:358px;font:bold 13.75px/18px 'DejaVu Sans',sans-serif;color:#000;letter-spacing:-0.149px;">АВТОГАЗ</span>
<span class="t" style="left:287.19px;top:358px;font:normal 13.75px/18px 'DejaVu Sans',sans-serif;color:#000;">2372.24</span>
<span class="t" style="left:457.34px;top:358px;font:normal 13.75px/18px 'DejaVu Sans',sans-serif;color:#000;">0.717606</span>
<span class="t" style="left:782.19px;top:358px;font:normal 13.75px/18px 'DejaVu Sans',sans-serif;color:#000;">1702.3333</span>
<span class="t" style="left:571.2px;top:358px;font:normal 13.75px/18px 'DejaVu Sans',sans-serif;color:#000;letter-spacing:0.552px;">20</span>
<span class="t" style="left:969.8px;top:358px;font:normal 13.75px/18px 'DejaVu Sans',sans-serif;color:#757575;letter-spacing:-0.416px;">#####.######</span>
<span class="t" style="left:1192.8px;top:358px;font:normal 13.75px/18px 'DejaVu Sans',sans-serif;color:#757575;letter-spacing:-0.416px;">#####.######</span>
<span class="t" style="left:72px;top:390px;font:bold 13.75px/18px 'DejaVu Sans',sans-serif;color:#000;letter-spacing:-0.697px;">АДБЛУ</span>
<span class="t" style="left:304.68px;top:390px;font:normal 13.75px/18px 'DejaVu Sans',sans-serif;color:#000;">28.00</span>
<span class="t" style="left:457.34px;top:390px;font:normal 13.75px/18px 'DejaVu Sans',sans-serif;color:#000;">0.825000</span>
<span class="t" style="left:799.69px;top:390px;font:normal 13.75px/18px 'DejaVu Sans',sans-serif;color:#000;">23.1000</span>
<span class="t" style="left:571.2px;top:390px;font:normal 13.75px/18px 'DejaVu Sans',sans-serif;color:#000;letter-spacing:0.552px;">20</span>
<span class="t" style="left:969.8px;top:390px;font:normal 13.75px/18px 'DejaVu Sans',sans-serif;color:#757575;letter-spacing:-0.416px;">#####.######</span>
<span class="t" style="left:1192.8px;top:390px;font:normal 13.75px/18px 'DejaVu Sans',sans-serif;color:#757575;letter-spacing:-0.416px;">#####.######</span>
<span class="t" style="left:72px;top:421px;font:bold 13.75px/18px 'DejaVu Sans',sans-serif;color:#000;letter-spacing:-0.39px;">АДБЛУ КУТИЯ</span>
<span class="t" style="left:313.43px;top:421px;font:normal 13.75px/18px 'DejaVu Sans',sans-serif;color:#000;">1.00</span>
<span class="t" style="left:448.59px;top:421px;font:normal 13.75px/18px 'DejaVu Sans',sans-serif;color:#000;">11.658333</span>
<span class="t" style="left:799.69px;top:421px;font:normal 13.75px/18px 'DejaVu Sans',sans-serif;color:#000;">11.6583</span>
<span class="t" style="left:571.2px;top:421px;font:normal 13.75px/18px 'DejaVu Sans',sans-serif;color:#000;letter-spacing:0.552px;">20</span>
<span class="t" style="left:969.8px;top:421px;font:normal 13.75px/18px 'DejaVu Sans',sans-serif;color:#757575;letter-spacing:-0.416px;">#####.######</span>
<span class="t" style="left:1192.8px;top:421px;font:normal 13.75px/18px 'DejaVu Sans',sans-serif;color:#757575;letter-spacing:-0.416px;">#####.######</span>
<span class="t" style="left:72px;top:453px;font:bold 13.75px/18px 'DejaVu Sans',sans-serif;color:#000;letter-spacing:-0.479px;">ДИЗЕЛ</span>
<span class="t" style="left:287.19px;top:453px;font:normal 13.75px/18px 'DejaVu Sans',sans-serif;color:#000;">8702.00</span>
<span class="t" style="left:457.34px;top:453px;font:normal 13.75px/18px 'DejaVu Sans',sans-serif;color:#000;">1.713428</span>
<span class="t" style="left:773.44px;top:453px;font:normal 13.75px/18px 'DejaVu Sans',sans-serif;color:#000;">14910.2500</span>
<span class="t" style="left:571.2px;top:453px;font:normal 13.75px/18px 'DejaVu Sans',sans-serif;color:#000;letter-spacing:0.552px;">20</span>
<span class="t" style="left:969.8px;top:453px;font:normal 13.75px/18px 'DejaVu Sans',sans-serif;color:#757575;letter-spacing:-0.416px;">#####.######</span>
<span class="t" style="left:1192.8px;top:453px;font:normal 13.75px/18px 'DejaVu Sans',sans-serif;color:#757575;letter-spacing:-0.416px;">#####.######</span>
<span class="t tabt" style="left:83px;top:9.6px;font:normal 15px/20px 'Liberation Sans',sans-serif;color:#1b1b1b;letter-spacing:-0.074px;">spetema.fmplus.bg/fuel_pu</span>
<span class="t" style="left:267.7px;top:53.5px;font:normal 17.5px/23px 'Liberation Sans',sans-serif;color:#69727c;letter-spacing:-0.526px;">Не защищено</span>
<span class="t" style="left:396.7px;top:52.4px;font:normal 16.5px/21px 'Liberation Sans',sans-serif;color:#6d8197;letter-spacing:0.311px;">spetema.<span class="i" style="color:#111">fmplus.bg</span>/fuel_purchase_bill_import4.aspx</span>
<span class="t" style="left:109.5px;top:1044px;font:normal 18.5px/24px 'Liberation Sans',sans-serif;color:#2b2b2b;letter-spacing:-0.145px;">Введите здесь текст для поиска</span>
<span class="t" style="left:1620.5px;top:1043.2px;font:normal 15px/20px 'Liberation Sans',sans-serif;color:#fff;letter-spacing:-1.505px;">BG</span>
<span class="t" style="left:1791px;top:1034px;font:normal 15px/20px 'Liberation Sans',sans-serif;color:#fff;letter-spacing:-0.549px;">23:40</span>
<span class="t" style="left:1775.5px;top:1057px;font:normal 15px/20px 'Liberation Sans',sans-serif;color:#fff;letter-spacing:-0.32px;">3.1.2022 г.</span>
<span class="t" style="left:1884.5px;top:1057px;font:bold 13px/17px 'Liberation Sans',sans-serif;color:#fff;">6</span>
</body></html>
